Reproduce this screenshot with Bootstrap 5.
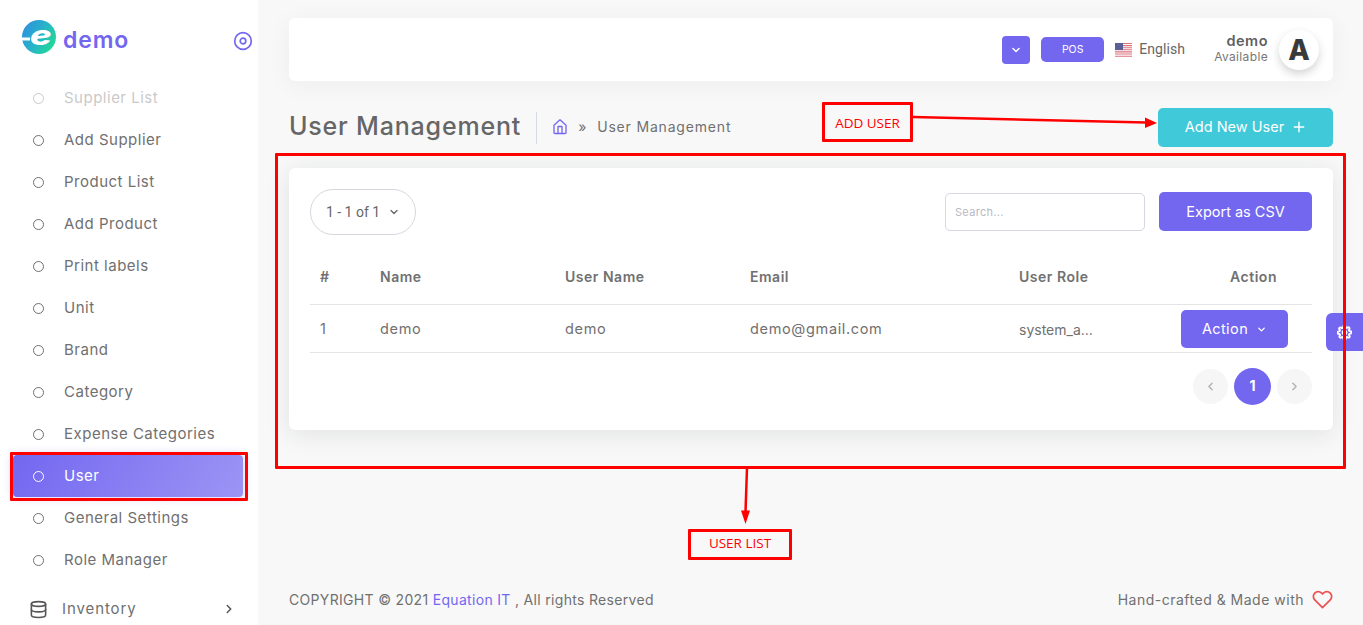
<!DOCTYPE html>
<html lang="en">
<head>
<meta charset="utf-8">
<title>User Management</title>
<link href="https://cdn.jsdelivr.net/npm/bootstrap@5.3.0/dist/css/bootstrap.min.css" rel="stylesheet">
<style>
:root{--brand:#7367f0}
html,body{height:625px;overflow:hidden}
body{font-family:Inter,"Liberation Sans",sans-serif;background:#f8f8f8;color:#707070;font-size:14px;letter-spacing:.35px}
.app-shell{height:625px;position:relative}
.side{width:258px;flex:none;background:#fff;overflow:hidden}
.side-head{height:77px;flex:none;padding:0 5px 0 21px}
.brand-name{color:var(--brand);font-size:23px;font-weight:600;margin-left:6px;margin-top:3px;letter-spacing:.9px}
.logo-mark{width:36px;height:36px;flex:none;margin-bottom:3px}
.side-list{position:relative;list-style:none;margin:0;padding:0 15px 0 13px;flex:none}
.side-list::before{content:"";position:absolute;left:0;right:0;top:0;height:38px;background:linear-gradient(rgba(255,255,255,.62) 70%,rgba(255,255,255,0));z-index:1}
.side-row{height:42px;padding-left:20px;display:flex;align-items:center;color:#707070;font-size:15px;letter-spacing:.5px;border-radius:4px}
.side-row.on{background:linear-gradient(118deg,#7367f0,rgba(115,103,240,.7));color:#fff;box-shadow:0 0 10px 1px rgba(115,103,240,.3)}
.ring{width:11px;height:11px;border:1.5px solid currentColor;border-radius:50%;margin-right:20px;flex:none}
.side-parent{height:42px;flex:none;margin-top:7px;padding:0 22px 0 29px;color:#707070;font-size:15px;letter-spacing:.9px}
.db-icon{margin-right:14px;flex:none}
.main-col{padding:18px 30px 0 31px;min-width:0}
.topbar{height:63px;background:#fff;border-radius:6px;box-shadow:0 4px 24px rgba(34,41,47,.05);padding:0 14px 0 0}
.btn-mini{width:28px;height:28px;background:var(--brand);border-radius:4px;border:0;padding:0;line-height:1}
.btn-pos{width:63px;height:25px;background:var(--brand);color:#fff;border:0;border-radius:5px;font-size:10.5px;padding:0;margin-left:11px;letter-spacing:0}
.flag-box{margin-left:11px;margin-right:7px;display:block}
.lang{font-family:Roboto,sans-serif;font-size:14px;letter-spacing:.1px;color:#666}
.who{margin-left:29px;text-align:right;line-height:1.2;margin-right:11px}
.who-name{font-weight:600;font-size:14.5px;letter-spacing:.5px;color:#5f5f5f;display:block;margin-bottom:1px;margin-top:-3px}
.who-state{font-size:12px;color:#777;display:block}
.face{width:40px;height:40px;border-radius:50%;background:#fff;box-shadow:0 4px 8px rgba(34,41,47,.2);font-weight:800;font-size:28px;color:#3a3a3a;line-height:40px;text-align:center;letter-spacing:0}
.title-row{margin-top:27px;height:39px}
.page-title{font-size:25px;font-weight:500;color:#666;margin:0;padding:0 15px 4px 0;letter-spacing:.82px;line-height:28px;border-right:1px solid #d6dce1}
.crumb{padding-left:15px;font-size:14px;color:#707070;gap:10px;letter-spacing:.82px;margin-top:-2px}
.btn-teal{width:175px;height:39px;background:#40c9d8;color:#fff;border:0;border-radius:5px;font-size:14.5px;padding:0 0 2px}
.panel{margin-top:21px;height:262px;background:#fff;border:0;border-radius:6px;box-shadow:0 4px 24px rgba(34,41,47,.1);padding:21px}
.pill{width:106px;height:46px;border:1px solid #d8d6de;border-radius:23px;font-family:Roboto,sans-serif;font-size:14px;color:#666;letter-spacing:0;background:#fff;padding:0}
.find{width:200px;height:38px;border:1px solid #d8d6de;border-radius:5px;font-size:11px;padding:0 9px;color:#aaa;letter-spacing:.3px;margin-right:14px}
.find::placeholder{color:#b9b9c3}
.btn-brand{background:var(--brand);color:#fff;border:0;border-radius:5px;font-size:14.5px;padding:0}
.btn-export{width:153px;height:39px;margin-top:-1px}
.users{margin:20px 0 0;table-layout:fixed;width:100%}
.users th,.users td{color:#707070;padding:0 10px;vertical-align:middle;border-color:#e4e4e4;background:transparent;white-space:nowrap}
.users td{height:48px;font-size:14.5px;letter-spacing:.65px;padding-top:2px}
.users th{height:49px;font-weight:600;font-size:14px;letter-spacing:.52px;padding-bottom:5px}
.c1{width:60px}.c2,.c3{width:185px}.c4{width:269px}.c5{width:162px}
.users th.action-head{text-align:right;padding-right:35px}
.users td.role-cell{font-size:14px;letter-spacing:0}
.btn-act{width:107px;height:38px;display:flex;align-items:center;justify-content:center;gap:8px;letter-spacing:.4px}
.pager{margin-top:16px;gap:6px}
.pg{width:35px;height:35px;border-radius:50%;background:#f6f6f6;border:0;padding:0;line-height:1;display:flex;align-items:center;justify-content:center}
.pg.now{width:37px;height:37px;background:var(--brand);color:#fff;font-weight:700;margin-top:-1px;font-size:14px}
.foot{margin-top:auto;height:52px;font-size:14px;letter-spacing:.32px}
.foot a{color:var(--brand);text-decoration:none}
.foot-end{letter-spacing:.5px}
.gear-tab{position:absolute;right:0;top:313px;width:37px;height:38px;background:var(--brand);border-radius:6px 0 0 6px;display:flex;align-items:center;justify-content:center}
.mark-box{position:absolute;border:3px solid #f00;border-radius:1px;color:#f00;font-family:"Open Sans",sans-serif;font-size:13.5px;letter-spacing:0;display:flex;align-items:center;justify-content:center;z-index:5}
.mb-side{left:10px;top:452px;width:238px;height:49px}
.mb-list{left:275px;top:153px;width:1071px;height:316px}
.mb-add{left:822px;top:102px;width:91px;height:40px;padding-top:3px}
.mb-user{left:688px;top:529px;width:104px;height:31px;padding-bottom:2px}
.arrows{position:absolute;left:0;top:0;z-index:5;pointer-events:none}
</style>
</head>
<body>
<div class="app-shell d-flex">
  <aside class="side d-flex flex-column">
    <div class="side-head d-flex align-items-center">
      <svg class="logo-mark" viewBox="0 0 36 36">
        <defs><linearGradient id="lg" x1="0" y1="0.2" x2="1" y2="0.8"><stop offset="0" stop-color="#2f8fe0"/><stop offset=".55" stop-color="#27b8c4"/><stop offset="1" stop-color="#1fe08e"/></linearGradient></defs>
        <circle cx="18" cy="18" r="17" fill="url(#lg)"/>
        <rect x="0" y="18.500" width="9" height="3" fill="#fff"/>
        <g transform="translate(20 26) scale(1.35 1)"><text text-anchor="middle" font-family="Inter,sans-serif" font-weight="800" font-style="italic" font-size="27" fill="#fff">e</text></g>
      </svg>
      <span class="brand-name">demo</span>
      <svg class="ms-auto mt-1" width="20" height="20" viewBox="0 0 20 20" fill="none" stroke="#7367f0" stroke-width="1.7"><circle cx="10" cy="10" r="8.300"/><circle cx="10" cy="10" r="2.800"/></svg>
    </div>
    <ul class="side-list">
      <li class="side-row"><span class="ring"></span>Supplier List</li>
      <li class="side-row"><span class="ring"></span>Add Supplier</li>
      <li class="side-row"><span class="ring"></span>Product List</li>
      <li class="side-row"><span class="ring"></span>Add Product</li>
      <li class="side-row"><span class="ring"></span>Print labels</li>
      <li class="side-row"><span class="ring"></span>Unit</li>
      <li class="side-row"><span class="ring"></span>Brand</li>
      <li class="side-row"><span class="ring"></span>Category</li>
      <li class="side-row"><span class="ring"></span>Expense Categories</li>
      <li class="side-row on"><span class="ring"></span>User</li>
      <li class="side-row"><span class="ring"></span>General Settings</li>
      <li class="side-row"><span class="ring"></span>Role Manager</li>
    </ul>
    <div class="side-parent d-flex align-items-center">
      <svg class="db-icon" width="19" height="19" viewBox="0 0 24 24" fill="none" stroke="#555" stroke-width="2" stroke-linecap="round" stroke-linejoin="round"><ellipse cx="12" cy="5" rx="9" ry="3"/><path d="M21 12c0 1.660-4 3-9 3s-9-1.340-9-3"/><path d="M3 5v14c0 1.660 4 3 9 3s9-1.340 9-3V5"/></svg>
      <span>Inventory</span>
      <svg class="ms-auto" width="14" height="14" viewBox="0 0 24 24" fill="none" stroke="#555" stroke-width="2.500" stroke-linecap="round" stroke-linejoin="round"><path d="M9 18l6-6-6-6"/></svg>
    </div>
  </aside>

  <main class="main-col flex-grow-1 d-flex flex-column">
    <nav class="topbar d-flex align-items-center justify-content-end">
      <button class="btn-mini d-flex align-items-center justify-content-center" type="button" aria-label="Menu"><svg width="12" height="12" viewBox="0 0 24 24" fill="none" stroke="#fff" stroke-width="3" stroke-linecap="round" stroke-linejoin="round"><path d="M6 9l6 6 6-6"/></svg></button>
      <button class="btn-pos" type="button">POS</button>
      <svg class="flag-box" width="17" height="14" viewBox="0 0 17 14"><rect width="17" height="14" fill="#fff"/><path d="M0 .5h17M0 2.600h17M0 4.700h17M0 6.800h17M0 8.900h17M0 11h17M0 13.200h17" stroke="#d9737c" stroke-width="1.100"/><rect width="8" height="7" fill="#5c5f95"/></svg>
      <span class="lang">English</span>
      <div class="who"><span class="who-name">demo</span><span class="who-state">Available</span></div>
      <div class="face">A</div>
    </nav>

    <div class="title-row d-flex align-items-center">
      <h2 class="page-title">User Management</h2>
      <div class="crumb d-flex align-items-center">
        <svg width="16" height="17" viewBox="0 0 24 24" fill="none" stroke="#7367f0" stroke-width="2" stroke-linecap="round" stroke-linejoin="round"><path d="M3 10l9-8 9 8v11a1.500 1.500 0 0 1-1.500 1.500h-15A1.500 1.500 0 0 1 3 21z"/><path d="M9 22.500V12h6v10.500"/></svg>
        <span>»</span>
        <span>User Management</span>
      </div>
      <button class="btn-teal ms-auto d-flex align-items-center justify-content-center gap-2" type="button">Add New User <svg width="14" height="14" viewBox="0 0 24 24" fill="none" stroke="#fff" stroke-width="2.500" stroke-linecap="round"><path d="M12 4v16M4 12h16"/></svg></button>
    </div>

    <section class="panel card">
      <div class="d-flex justify-content-between align-items-center">
        <button class="pill d-flex align-items-center justify-content-center gap-2" type="button">1 - 1 of 1 <svg width="12" height="12" viewBox="0 0 24 24" fill="none" stroke="#666" stroke-width="2.500" stroke-linecap="round" stroke-linejoin="round"><path d="M6 9l6 6 6-6"/></svg></button>
        <div class="d-flex align-items-center">
          <input class="find" type="text" placeholder="Search...">
          <button class="btn-brand btn-export" type="button">Export as CSV</button>
        </div>
      </div>
      <table class="table users">
        <colgroup><col class="c1"><col class="c2"><col class="c3"><col class="c4"><col class="c5"><col></colgroup>
        <thead><tr><th>#</th><th>Name</th><th>User Name</th><th>Email</th><th>User Role</th><th class="action-head">Action</th></tr></thead>
        <tbody><tr><td>1</td><td>demo</td><td>demo</td><td>demo@gmail.com</td><td class="role-cell">system_a...</td><td><button class="btn-brand btn-act" type="button">Action <svg width="11" height="11" viewBox="0 0 24 24" fill="none" stroke="#fff" stroke-width="3" stroke-linecap="round" stroke-linejoin="round"><path d="M6 9l6 6 6-6"/></svg></button></td></tr></tbody>
      </table>
      <div class="pager d-flex justify-content-end align-items-start">
        <button class="pg" type="button" aria-label="Previous"><svg width="13" height="13" viewBox="0 0 24 24" fill="none" stroke="#b0b0b0" stroke-width="2.500" stroke-linecap="round" stroke-linejoin="round"><path d="M15 18l-6-6 6-6"/></svg></button>
        <button class="pg now" type="button">1</button>
        <button class="pg" type="button" aria-label="Next"><svg width="13" height="13" viewBox="0 0 24 24" fill="none" stroke="#b0b0b0" stroke-width="2.500" stroke-linecap="round" stroke-linejoin="round"><path d="M9 18l6-6-6-6"/></svg></button>
      </div>
    </section>

    <footer class="foot d-flex justify-content-between align-items-center">
      <span>COPYRIGHT © 2021 <a href="#">Equation IT</a> , All rights Reserved</span>
      <span class="foot-end d-flex align-items-center gap-2">Hand-crafted &amp; Made with <svg width="21" height="21" viewBox="0 0 24 24" fill="none" stroke="#ea5455" stroke-width="2" stroke-linecap="round" stroke-linejoin="round"><path d="M20.840 4.610a5.500 5.500 0 0 0-7.780 0L12 5.670l-1.060-1.060a5.500 5.500 0 0 0-7.780 7.780L12 21.230l8.840-8.840a5.500 5.500 0 0 0 0-7.780z"/></svg></span>
    </footer>
  </main>

  <div class="gear-tab"><svg width="15" height="15" viewBox="0 0 24 24" fill="none" stroke="#fff" stroke-width="3" stroke-linecap="round" stroke-linejoin="round"><circle cx="12" cy="12" r="3"/><path d="M19.400 15a1.650 1.650 0 0 0 .33 1.820l.06.06a2 2 0 1 1-2.830 2.830l-.06-.06a1.650 1.650 0 0 0-2.800 1.170V21a2 2 0 1 1-4 0v-.09a1.650 1.650 0 0 0-2.830-1.110l-.06.06a2 2 0 1 1-2.830-2.830l.06-.06a1.650 1.650 0 0 0-1.170-2.800H3a2 2 0 1 1 0-4h.09a1.650 1.650 0 0 0 1.110-2.830l-.06-.06a2 2 0 1 1 2.830-2.830l.06.06a1.650 1.650 0 0 0 2.800-1.170V3a2 2 0 1 1 4 0v.09a1.650 1.650 0 0 0 2.830 1.110l.06-.06a2 2 0 1 1 2.830 2.830l-.06.06a1.650 1.650 0 0 0 1.170 2.800H21a2 2 0 1 1 0 4h-.09a1.650 1.650 0 0 0-1.510 1z"/></svg></div>

  <div class="mark-box mb-side"></div>
  <div class="mark-box mb-list"></div>
  <div class="mark-box mb-add">ADD USER</div>
  <div class="mark-box mb-user">USER LIST</div>
  <svg class="arrows" width="1363" height="625" viewBox="0 0 1363 625" fill="#f00" stroke="none">
    <path d="M913 117L1146 122.500" stroke="#f00" stroke-width="2.500" fill="none"/>
    <path d="M1145 117.500L1157 123L1145 128z"/>
    <path d="M747 468L745.500 512" stroke="#f00" stroke-width="2.500" fill="none"/>
    <path d="M741 510.500L750 510.500L745.500 524z"/>
  </svg>
</div>
<script src="https://cdn.jsdelivr.net/npm/bootstrap@5.3.0/dist/js/bootstrap.bundle.min.js"></script>
</body>
</html>
